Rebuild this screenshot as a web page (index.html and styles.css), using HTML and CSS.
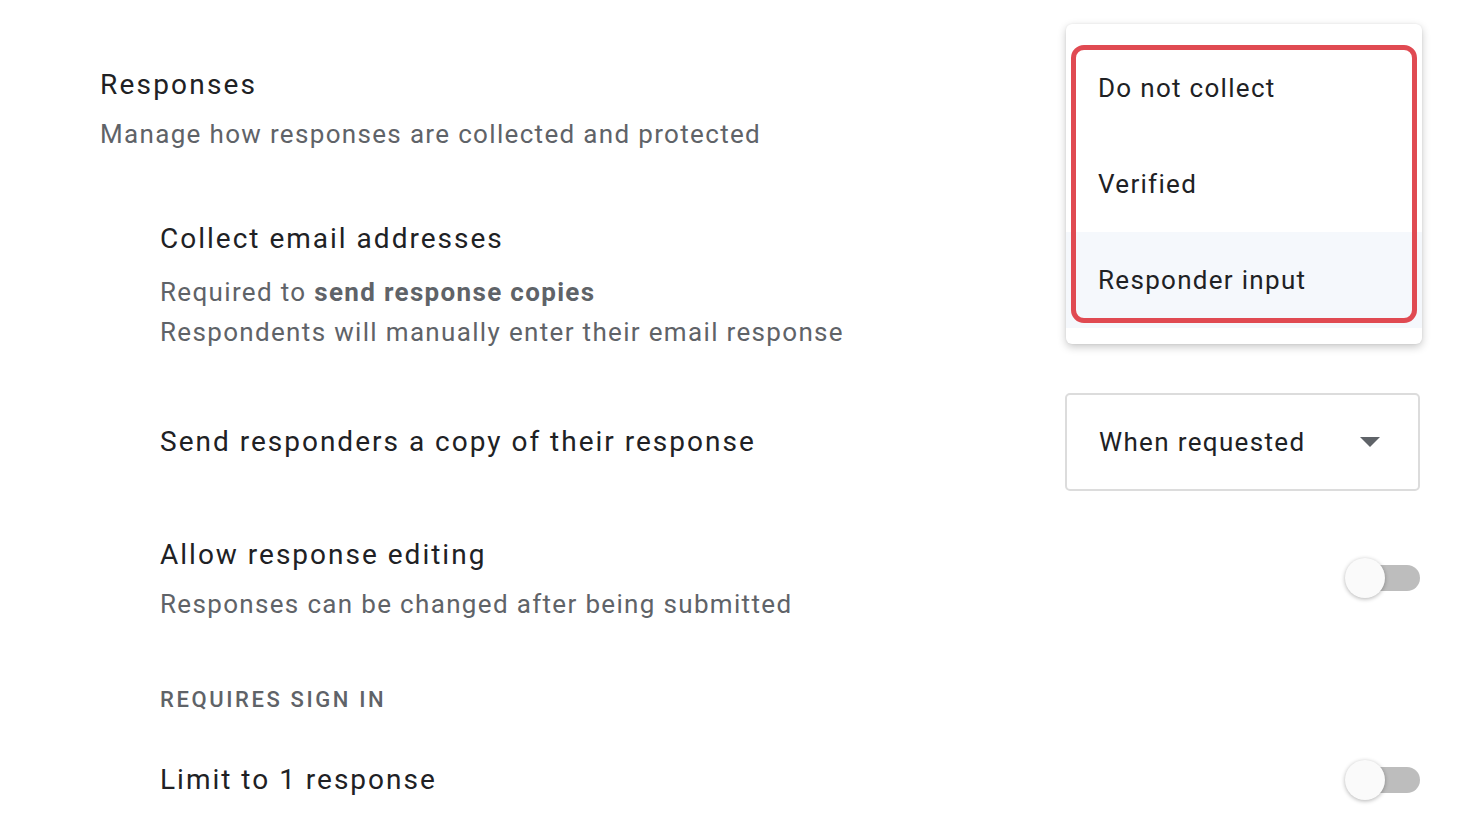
FILE: index.html
```
<!DOCTYPE html>
<html lang="en">
<head>
  <meta charset="UTF-8">
  <meta name="viewport" content="width=device-width, initial-scale=1.0">
  <title>Responses settings</title>
  <link rel="stylesheet" href="styles.css">
</head>
<body>
  <main class="settings">
    <div class="section-head">
      <h1 class="section-title">Responses</h1>
      <p class="section-sub">Manage how responses are collected and protected</p>
    </div>

    <div class="setting-list">
      <div class="setting first">
        <div class="setting-text">
          <div class="setting-title">Collect email addresses</div>
          <div class="setting-desc">
            <div>Required to <b>send response copies</b></div>
            <div>Respondents will manually enter their email response</div>
          </div>
        </div>
      </div>

      <div class="setting select-row">
        <div class="setting-text">
          <div class="setting-title">Send responders a copy of their response</div>
        </div>
        <div class="select">
          <span>When requested</span>
          <svg class="select-arrow" width="20" height="10" viewBox="0 0 20 10"><path d="M0 0h20L10 10z" fill="#5f6368"/></svg>
        </div>
      </div>

      <div class="setting toggle-row">
        <div class="setting-text">
          <div class="setting-title">Allow response editing</div>
          <div class="setting-desc">Responses can be changed after being submitted</div>
        </div>
        <div class="toggle"><div class="toggle-thumb"></div></div>
      </div>

      <div class="group-label">REQUIRES SIGN IN</div>

      <div class="setting limit-row">
        <div class="setting-text">
          <div class="setting-title">Limit to 1 response</div>
        </div>
        <div class="toggle"><div class="toggle-thumb"></div></div>
      </div>
    </div>
  </main>

  <!-- open dropdown for "Collect email addresses" -->
  <div class="menu">
    <div class="menu-item">Do not collect</div>
    <div class="menu-item">Verified</div>
    <div class="menu-item selected">Responder input</div>
    <div class="menu-outline"></div>
  </div>
</body>
</html>
```

FILE: styles.css
```
html, body {
  margin: 0;
  padding: 0;
  background: #ffffff;
}

body {
  font-family: Roboto, "Noto Sans", Arial, sans-serif;
  color: #202124;
  width: 1480px;
  height: 840px;
  overflow: hidden;
  position: relative;
}

.settings {
  padding: 65px 60px 0 100px;
}

.section-title {
  margin: 0;
  font-size: 28px;
  font-weight: 400;
  line-height: 40px;
  letter-spacing: 2.2px;
}

.section-sub {
  margin: 9px 0 0;
  font-size: 26px;
  line-height: 40px;
  letter-spacing: 1.33px;
  color: #5f6368;
}

.setting-list {
  margin-left: 60px;
}

.setting {
  display: flex;
  align-items: center;
  justify-content: space-between;
}

.setting-title {
  font-size: 28px;
  line-height: 40px;
  letter-spacing: 2px;
}

.setting-desc {
  font-size: 26px;
  line-height: 40px;
  letter-spacing: 1.33px;
  color: #5f6368;
}

.setting-desc b {
  font-weight: 700;
}

.setting.first {
  margin-top: 65px;
}

.setting.first .setting-desc {
  margin-top: 13px;
}

.select-row {
  margin-top: 41px;
}

.toggle-row {
  margin-top: 44px;
}

.toggle-row .setting-desc {
  margin-top: 9px;
}

.toggle-row .toggle {
  margin-bottom: 3px;
}

.group-label {
  margin-top: 61px;
  font-size: 22px;
  line-height: 30px;
  font-weight: 500;
  letter-spacing: 2.6px;
  color: #5f6368;
}

.limit-row {
  margin-top: 45px;
}

.select {
  box-sizing: border-box;
  width: 355px;
  height: 98px;
  border: 2px solid #dcdcdc;
  border-radius: 5px;
  display: flex;
  align-items: center;
  justify-content: space-between;
  padding: 0 38px 0 32px;
  font-size: 26px;
  letter-spacing: 1.35px;
  color: #202124;
}

.toggle {
  position: relative;
  width: 70px;
  height: 26px;
  border-radius: 13px;
  background: #bdbdbd;
}

.toggle-thumb {
  position: absolute;
  left: -5px;
  top: -7px;
  width: 40px;
  height: 40px;
  border-radius: 50%;
  background: #fafafa;
  box-shadow: 0 1px 4px rgba(0, 0, 0, 0.3);
}

.menu {
  position: absolute;
  top: 24px;
  left: 1066px;
  width: 356px;
  padding: 16px 0;
  background: #ffffff;
  border-radius: 6px;
  box-shadow: 0 3px 8px rgba(0, 0, 0, 0.22), 0 0 2px rgba(0, 0, 0, 0.08);
}

.menu-item {
  height: 96px;
  display: flex;
  align-items: center;
  padding-left: 32px;
  font-size: 26px;
  letter-spacing: 1.3px;
  color: #202124;
}

.menu-item.selected {
  background: #f5f8fc;
}

.menu-outline {
  position: absolute;
  top: 21px;
  left: 5px;
  right: 5px;
  bottom: 21px;
  border: 5px solid #e04a52;
  border-radius: 13px;
}
```
